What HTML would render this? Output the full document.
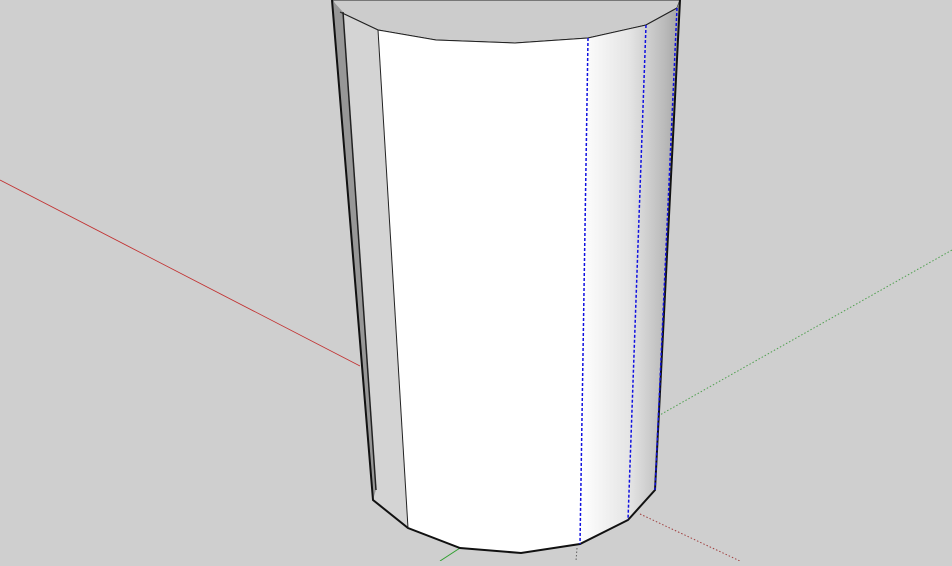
<!DOCTYPE html>
<html><head><style>html,body{margin:0;padding:0;background:#cfcfcf;overflow:hidden}</style></head>
<body>
<svg width="952" height="561" viewBox="0 0 952 561" xmlns="http://www.w3.org/2000/svg">
<defs>
<linearGradient id="g" x1="580" y1="0" x2="680" y2="0" gradientUnits="userSpaceOnUse">
<stop offset="0" stop-color="#ffffff"/><stop offset="0.5" stop-color="#e4e4e4"/><stop offset="0.85" stop-color="#bababa"/><stop offset="1" stop-color="#a4a4a4"/>
</linearGradient>
</defs>
<rect width="952" height="561" fill="#cfcfcf"/>
<line x1="0" y1="180" x2="360" y2="366" stroke="#c23030" stroke-width="0.8"/>
<line x1="640" y1="514" x2="740" y2="561" stroke="#a04040" stroke-width="1" stroke-dasharray="1.5,2"/>
<line x1="658" y1="416" x2="952" y2="250" stroke="#50a050" stroke-width="1" stroke-dasharray="1.5,2"/>
<line x1="440" y1="561" x2="460" y2="548" stroke="#30a030" stroke-width="1"/>
<line x1="577" y1="548" x2="576" y2="561" stroke="#606060" stroke-width="1" stroke-dasharray="1.5,2"/>
<polygon points="332,0 680,0 677,8 646,25 588,38 515,43 436,40 378,30 340,12" fill="#cccccc" stroke="#222" stroke-width="1"/>
<polygon points="332,0 343,12 376,490 373,500" fill="#979797"/>
<polygon points="340,12 378,30 408,528 373,500 376,490 343,12" fill="#d4d4d4"/>
<polygon points="378,30 436,40 515,43 588,38 580,544 521,553 460,548 408,528" fill="#ffffff"/>
<polygon points="588,38 646,25 677,8 680,0 655,490 628,520 580,544" fill="url(#g)"/>
<polyline points="332,0 373,500 408,528 460,548 521,553 580,544 628,520 655,490 680,0" fill="none" stroke="#111" stroke-width="2"/>
<line x1="343" y1="12" x2="376" y2="490" stroke="#222" stroke-width="1.5"/>
<line x1="378" y1="30" x2="408" y2="528" stroke="#222" stroke-width="1"/>
<polyline points="340,12 378,30 436,40 515,43 588,38 646,25 677,8" fill="none" stroke="#222" stroke-width="1"/>
<line x1="588" y1="38" x2="580" y2="544" stroke="#1010e0" stroke-width="1.5" stroke-dasharray="3,2"/>
<line x1="646" y1="25" x2="628" y2="520" stroke="#1010e0" stroke-width="1.5" stroke-dasharray="3,2"/>
<line x1="677" y1="8" x2="655" y2="490" stroke="#1010e0" stroke-width="1.5" stroke-dasharray="3,2"/>
</svg>
</body></html>
